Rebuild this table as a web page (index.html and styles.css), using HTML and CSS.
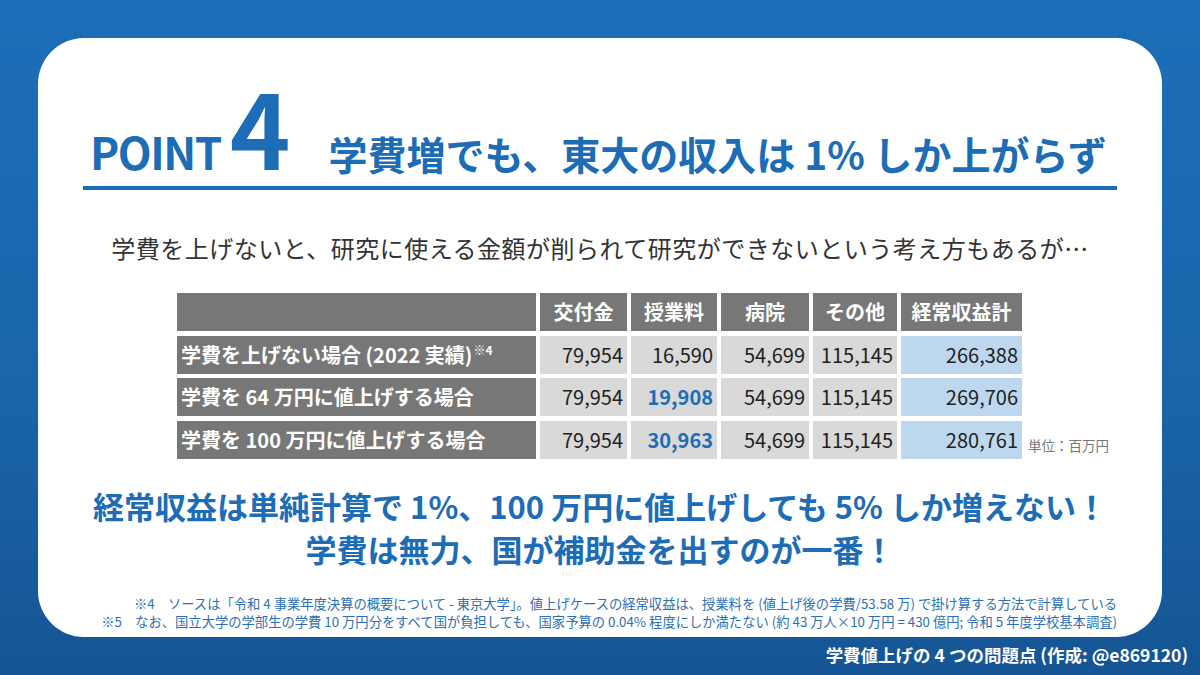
FILE: index.html
```html
<!DOCTYPE html>
<html lang="ja">
<head>
<meta charset="utf-8">
<link rel="stylesheet" href="styles.css">
</head>
<body>
<div class="page">
  <div class="card">
    <div class="title-row">
      <span class="point">POINT</span>
      <span class="num">4</span>
      <span class="title">学費増でも、東大の収入は 1% しか上がらず</span>
    </div>
    <p class="lead">学費を上げないと、研究に使える金額が削られて研究ができないという考え方もあるが…</p>
    <div class="table-wrap">
      <div class="table">
        <div class="th"></div>
        <div class="th">交付金</div>
        <div class="th">授業料</div>
        <div class="th">病院</div>
        <div class="th">その他</div>
        <div class="th">経常収益計</div>

        <div class="rh">学費を上げない場合 (2022 実績)<sup>※4</sup></div>
        <div class="td">79,954</div>
        <div class="td">16,590</div>
        <div class="td">54,699</div>
        <div class="td">115,145</div>
        <div class="td total">266,388</div>

        <div class="rh">学費を 64 万円に値上げする場合</div>
        <div class="td">79,954</div>
        <div class="td hl">19,908</div>
        <div class="td">54,699</div>
        <div class="td">115,145</div>
        <div class="td total">269,706</div>

        <div class="rh">学費を 100 万円に値上げする場合</div>
        <div class="td">79,954</div>
        <div class="td hl">30,963</div>
        <div class="td">54,699</div>
        <div class="td">115,145</div>
        <div class="td total">280,761</div>
      </div>
      <span class="unit">単位：百万円</span>
    </div>
    <div class="conclusion">
      <p>経常収益は単純計算で 1%、100 万円に値上げしても 5% しか増えない！</p>
      <p>学費は無力、国が補助金を出すのが一番！</p>
    </div>
    <div class="notes">
      <p>※4　ソースは「令和 4 事業年度決算の概要について - 東京大学」。値上げケースの経常収益は、授業料を (値上げ後の学費/53.58 万) で掛け算する方法で計算している</p>
      <p>※5　なお、国立大学の学部生の学費 10 万円分をすべて国が負担しても、国家予算の 0.04% 程度にしか満たない (約 43 万人×10 万円 = 430 億円; 令和 5 年度学校基本調査)</p>
    </div>
  </div>
  <div class="credit">学費値上げの 4 つの問題点 (作成: @e869120)</div>
</div>
</body>
</html>
```

FILE: styles.css
```css
* { box-sizing: border-box; }
html, body { margin: 0; padding: 0; }
body {
  font-family: "Noto Sans CJK JP", "Noto Sans", sans-serif;
  width: 1200px;
  height: 675px;
  overflow: hidden;
}
p { margin: 0; }
.page {
  width: 1200px;
  height: 675px;
  background: linear-gradient(180deg, #1c6eb8 0%, #1a65ab 55%, #155594 100%);
  display: flex;
  flex-direction: column;
}
.card {
  margin: 38px 38px 0 38px;
  height: 599px;
  background: #fff;
  border-radius: 46px;
  padding: 0 45px;
  display: flex;
  flex-direction: column;
}
.title-row {
  display: flex;
  align-items: baseline;
  padding: 36px 0 9px 7px;
  border-bottom: 4px solid #1c6cb6;
  color: #1c6cb6;
  font-weight: bold;
  line-height: 1;
  white-space: nowrap;
}
.point {
  font-size: 44px;
  letter-spacing: -1.5px;
}
.num {
  font-size: 103px;
  margin-left: 9px;
}
.title {
  font-size: 39px;
  margin-left: 38px;
}
.lead {
  margin-top: 42px;
  text-align: center;
  font-size: 24px;
  letter-spacing: 0.5px;
  color: #333;
  line-height: 32px;
}
.table-wrap {
  display: flex;
  align-items: flex-end;
  margin: 29px 0 0 94px;
}
.table {
  display: grid;
  grid-template-columns: 359px 87px 86px 88px 84px 121px;
  grid-auto-rows: 38px;
  column-gap: 4px;
  row-gap: 4.5px;
  font-size: 20px;
}
.th, .rh, .td {
  display: flex;
  align-items: center;
  line-height: 1;
}
.th {
  background: #777;
  color: #fff;
  font-weight: bold;
  justify-content: center;
}
.rh {
  background: #777;
  color: #fff;
  font-weight: bold;
  padding-left: 4px;
  white-space: nowrap;
}
.rh sup {
  font-size: 12px;
  align-self: flex-start;
  margin-top: 8px;
  margin-left: 1px;
}
.td {
  background: #d9d9d9;
  color: #222;
  justify-content: flex-end;
  padding-right: 4px;
}
.td.total { background: #bdd7ee; }
.td.hl { color: #1c6cb6; font-weight: bold; }
.unit {
  font-size: 13.5px;
  color: #777;
  margin: 0 0 4px 6px;
  white-space: nowrap;
}
.conclusion {
  margin-top: 25px;
  text-align: center;
  font-size: 31px;
  font-weight: bold;
  color: #1c6cb6;
  line-height: 43px;
}
.notes {
  margin-top: 25px;
  text-align: right;
  font-size: 13.3px;
  line-height: 18px;
  color: #2d6fb4;
  white-space: nowrap;
}
.credit {
  flex: 1;
  text-align: right;
  padding-right: 12px;
  color: #fff;
  font-weight: bold;
  font-size: 17.5px;
  line-height: 36px;
}
```
